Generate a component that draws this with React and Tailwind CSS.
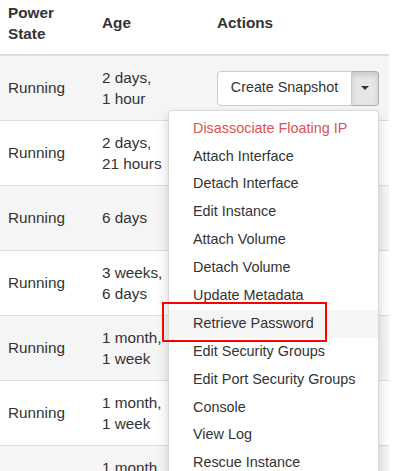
import React from 'react'

const rows = [
  ['2 days,', '1 hour'],
  ['2 days,', '21 hours'],
  ['6 days'],
  ['3 weeks,', '6 days'],
  ['1 month,', '1 week'],
  ['1 month,', '1 week'],
  ['1 month,', '1 week'],
]

const actions = [
  'Disassociate Floating IP',
  'Attach Interface',
  'Detach Interface',
  'Edit Instance',
  'Attach Volume',
  'Detach Volume',
  'Update Metadata',
  'Retrieve Password',
  'Edit Security Groups',
  'Edit Port Security Groups',
  'Console',
  'View Log',
  'Rescue Instance',
  'Pause Instance',
  'Suspend Instance',
]

function ActionButton() {
  return (
    <div className="relative flex">
      <div className="w-[135px] h-[35px] flex items-center justify-center bg-white border border-[#ccc] rounded-l-[4px] text-[14.3px]">
        Create Snapshot
      </div>
      <div className="w-[27px] h-[35px] flex items-center justify-center bg-[#e6e6e6] border border-[#adadad] border-l-0 rounded-r-[4px] shadow-[inset_0_3px_5px_rgba(0,0,0,0.125)]">
        <span className="w-0 h-0 border-l-[4px] border-r-[4px] border-t-[4px] border-l-transparent border-r-transparent border-t-[#333]" />
      </div>

      {/* dropdown menu */}
      <div className="absolute right-0 top-[39px] w-[211px] z-10 bg-white border border-[rgba(0,0,0,0.15)] rounded-[4px] shadow-[0_6px_12px_rgba(0,0,0,0.175)] pt-[4px] pb-[3px]">
        {actions.map((a, i) => (
          <div
            key={a}
            className={`h-[27.9px] flex items-center pl-[24px] text-[14.4px] whitespace-nowrap ${
              i === 0 ? 'text-[#d9534f]' : 'text-[#333]'
            } ${i === 7 ? 'bg-[#f5f5f5]' : ''}`}
          >
            {a}
          </div>
        ))}
      </div>
    </div>
  )
}

export default function App() {
  return (
    <div
      className="relative w-[400px] h-[471px] overflow-hidden bg-white text-[#333]"
      style={{ fontFamily: '"Liberation Sans", Arial, sans-serif' }}
    >
      <div className="w-[389px]">
        {/* header */}
        <div className="grid grid-cols-[94px_115px_180px] h-[56px] border-b-2 border-[#ddd] pb-[9px] text-[15.3px] font-bold leading-[21px]">
          <div className="pl-2 flex items-center">
            <span>Power<br />State</span>
          </div>
          <div className="pl-2 flex items-center">Age</div>
          <div className="pl-2 flex items-center">Actions</div>
        </div>

        {/* rows */}
        {rows.map((age, i) => (
          <div
            key={i}
            className={`grid grid-cols-[94px_115px_180px] text-[15.3px] leading-[21.5px] ${
              i === 0 ? 'h-[64px]' : 'h-[65px] border-t border-[#ddd]'
            } ${i % 2 === 0 ? 'bg-[#f5f5f5]' : 'bg-white'}`}
          >
            <div className="pl-2 flex items-center">Running</div>
            <div className="pl-2 flex items-center">
              <span>
                {age[0]}
                {age[1] && <br />}
                {age[1]}
              </span>
            </div>
            <div className="pl-2 flex items-center">{i === 0 && <ActionButton />}</div>
          </div>
        ))}
      </div>

      {/* annotation */}
      <div className="absolute left-[162px] top-[302px] w-[165px] h-[40px] border-2 border-[#ff0000] z-20" />
    </div>
  )
}
